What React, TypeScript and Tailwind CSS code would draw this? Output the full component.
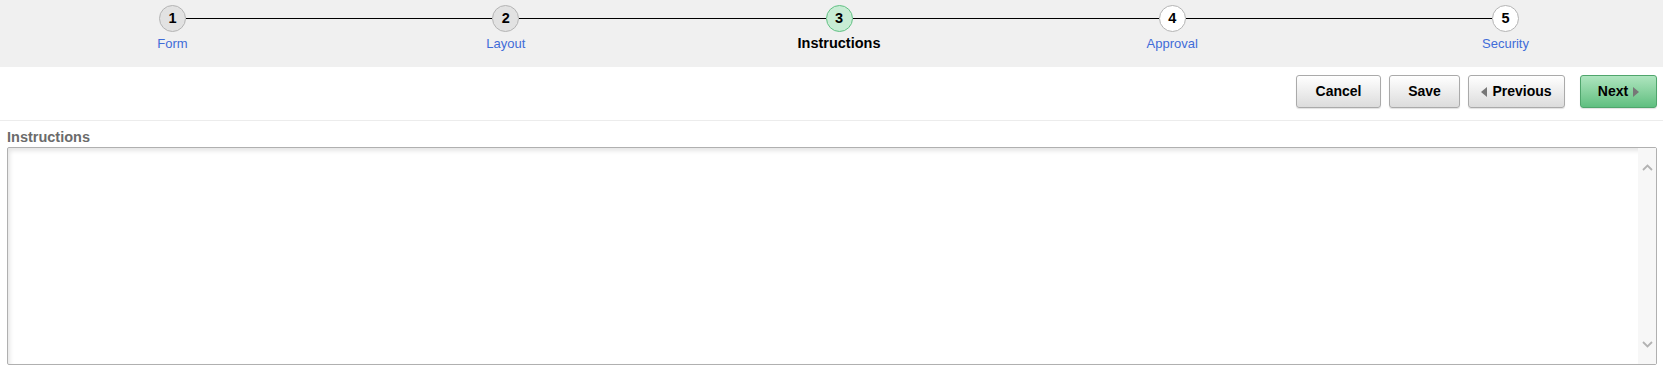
import React from 'react';

type Step = { n: number; label: string; state: 'done' | 'current' | 'todo' };

const steps: Step[] = [
  { n: 1, label: 'Form', state: 'done' },
  { n: 2, label: 'Layout', state: 'done' },
  { n: 3, label: 'Instructions', state: 'current' },
  { n: 4, label: 'Approval', state: 'todo' },
  { n: 5, label: 'Security', state: 'todo' },
];

const circleClass = {
  done: 'bg-[#e2e2e2] border-[#b4b4b4]',
  current: 'bg-[#c8ecd4] border-[#62c184]',
  todo: 'bg-white border-[#b4b4b4]',
};

const StepItem = ({ step }: { step: Step }) => (
  <div className="flex flex-col items-center w-[27px] shrink-0">
    <div
      className={`w-[27px] h-[27px] rounded-full border flex items-center justify-center text-[14.5px] font-bold text-black ${circleClass[step.state]}`}
    >
      {step.n}
    </div>
    <div className="flex justify-center w-[27px] mt-[3px] h-[17px]">
      {step.state === 'current' ? (
        <span className="whitespace-nowrap text-[14.5px] font-bold text-black leading-[17px]">{step.label}</span>
      ) : (
        <span className="whitespace-nowrap text-[13px] text-[#3f6cd8] leading-[17px]">{step.label}</span>
      )}
    </div>
  </div>
);

const Button = ({
  children,
  primary,
  className = '',
}: {
  children: React.ReactNode;
  primary?: boolean;
  className?: string;
}) => (
  <button
    className={`h-[33px] rounded-[3px] border flex items-center justify-center gap-[5px] text-[14px] font-bold text-black shadow-[0_1px_1px_rgba(0,0,0,0.12)] ${
      primary
        ? 'bg-gradient-to-b from-[#aee5bf] to-[#5fbf80] border-[#4fa56c]'
        : 'bg-gradient-to-b from-white to-[#dcdcdc] border-[#aaaaaa]'
    } ${className}`}
  >
    {children}
  </button>
);

const TriLeft = () => (
  <svg width="6" height="10" viewBox="0 0 6 10">
    <path d="M6 0 L0 5 L6 10 Z" fill="#777" />
  </svg>
);

const TriRight = () => (
  <svg width="6" height="10" viewBox="0 0 6 10">
    <path d="M0 0 L6 5 L0 10 Z" fill="#777" />
  </svg>
);

export default function App() {
  return (
    <div className="w-[1663px] h-[376px] bg-white font-['Liberation_Sans',Arial,sans-serif]">
      {/* train stops */}
      <div className="h-[67px] bg-[#f0f0f0] pt-[5px]">
        <div className="ml-[159px] w-[1360px] flex items-start">
          {steps.map((s, i) => (
            <React.Fragment key={s.n}>
              <StepItem step={s} />
              {i < steps.length - 1 && <div className="flex-1 h-px bg-black mt-[13px]" />}
            </React.Fragment>
          ))}
        </div>
      </div>

      {/* toolbar */}
      <div className="h-[54px] border-b border-[#ececec] flex items-start justify-end pt-[8px] pr-[6px]">
        <Button className="w-[85px]">Cancel</Button>
        <Button className="w-[71px] ml-[8px]">Save</Button>
        <Button className="w-[97px] ml-[8px]">
          <TriLeft />
          Previous
        </Button>
        <Button primary className="w-[77px] ml-[15px]">
          Next
          <TriRight />
        </Button>
      </div>

      {/* instructions field */}
      <div className="pl-[7px] pr-[6px] pt-[6px]">
        <div className="text-[14.5px] font-bold text-[#6b6b6b] leading-[20px]">Instructions</div>
        <div className="h-[218px] border border-[#b0b0b0] rounded-[2px] flex shadow-[inset_2px_3px_4px_rgba(0,0,0,0.10)]">
          <div className="flex-1" />
          <div className="w-[18px] bg-[#f7f7f7] flex flex-col items-center justify-between pt-[16px] pb-[16px]">
            <svg width="11" height="7" viewBox="0 0 11 7">
              <path d="M1 6 L5.5 1.5 L10 6" fill="none" stroke="#b3b3b3" strokeWidth="1.8" />
            </svg>
            <svg width="11" height="7" viewBox="0 0 11 7">
              <path d="M1 1 L5.5 5.5 L10 1" fill="none" stroke="#b3b3b3" strokeWidth="1.8" />
            </svg>
          </div>
        </div>
      </div>
    </div>
  );
}
